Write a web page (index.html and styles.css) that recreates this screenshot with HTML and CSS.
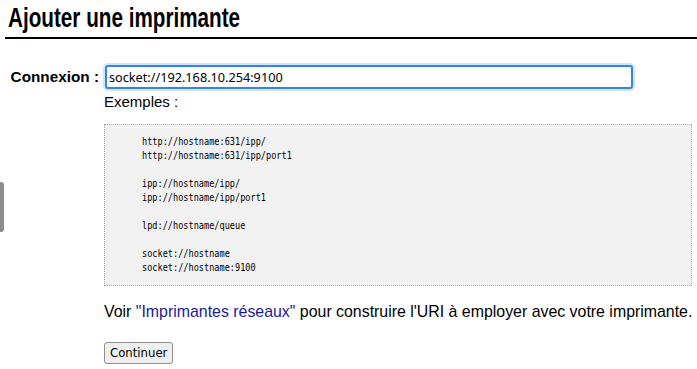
FILE: index.html
```html
<!DOCTYPE html>
<html lang="fr">
<head>
  <meta charset="UTF-8" />
  <title>Ajouter une imprimante</title>
  <link rel="stylesheet" href="styles.css">
</head>
<body>
  <div class="side-handle"></div>
  <h1 class="title"><span class="title-text">Ajouter une imprimante</span></h1>
  <form class="add-form">
    <label class="field-label" for="device-uri">Connexion :</label>
    <div class="field">
      <input class="uri-input" id="device-uri" type="text" value="socket://192.168.10.254:9100">
      <p class="examples-title">Exemples :</p>
      <pre class="examples"><span class="examples-text">http://hostname:631/ipp/
http://hostname:631/ipp/port1

ipp://hostname/ipp/
ipp://hostname/ipp/port1

lpd://hostname/queue

socket://hostname
socket://hostname:9100</span></pre>
      <p class="hint">Voir <a href="#">"Imprimantes réseaux"</a> pour construire l'URI à employer avec votre imprimante.</p>
      <button class="submit-btn" type="button">Continuer</button>
    </div>
  </form>
  <script>
    document.getElementById('device-uri').focus();
  </script>
</body>
</html>
```

FILE: styles.css
```css
body {
  margin: 0 0 0 5px;
  background: #fff;
  color: #000;
  font-family: "Liberation Sans", Arial, sans-serif;
  font-size: 15px;
}
.side-handle {
  position: fixed;
  left: 0;
  top: 182px;
  width: 4px;
  height: 50px;
  background: #8d8d8d;
  border-radius: 0 3px 3px 0;
}
.title {
  margin: 0;
  padding: 3px 0 3px 3px;
  font-size: 27px;
  font-weight: bold;
  border-bottom: 2px solid #000;
}
.title-text {
  display: inline-block;
  transform: scaleX(0.766);
  transform-origin: left center;
}
.add-form {
  display: grid;
  grid-template-columns: 94px 1fr;
  column-gap: 5px;
  margin-top: 26px;
}
.field-label {
  font-weight: bold;
  text-align: right;
  padding-top: 3px;
  font-size: 15.3px;
}
.field {
  display: flex;
  flex-direction: column;
  align-items: flex-start;
}
.uri-input {
  width: 528px;
  height: 24px;
  box-sizing: border-box;
  margin: 0 0 0 1px;
  padding: 0 2px;
  border: 2px solid #3584e4;
  border-radius: 3px;
  box-shadow: 0 0 0 2px #cfe5fb;
  outline: none;
  font-family: "Noto Sans", sans-serif;
  font-size: 12.7px;
  color: #000;
}
.examples-title {
  margin: 4px 0 0;
}
.examples {
  align-self: stretch;
  margin: 14px 5px 0 0;
  padding: 10px 0 10px 37px;
  background: #f1f1f1;
  border: 1px dotted #aaa;
  font-family: "DejaVu Sans Mono", monospace;
  font-size: 11px;
  line-height: 14px;
  color: #000;
}
.examples-text {
  display: inline-block;
  transform: scaleX(0.78);
  transform-origin: left top;
}
.hint {
  margin: 17px 0 0;
  font-size: 15.9px;
}
.hint a {
  color: #1a1a9a;
  text-decoration: none;
}
.submit-btn {
  margin-top: 21px;
  padding: 2px 5px 3px;
  font-family: "DejaVu Sans Condensed", "DejaVu Sans", sans-serif;
  font-size: 13px;
  color: #000;
  background: #efefef;
  border: 1px solid #8f8f8f;
  border-radius: 3px;
}
```
